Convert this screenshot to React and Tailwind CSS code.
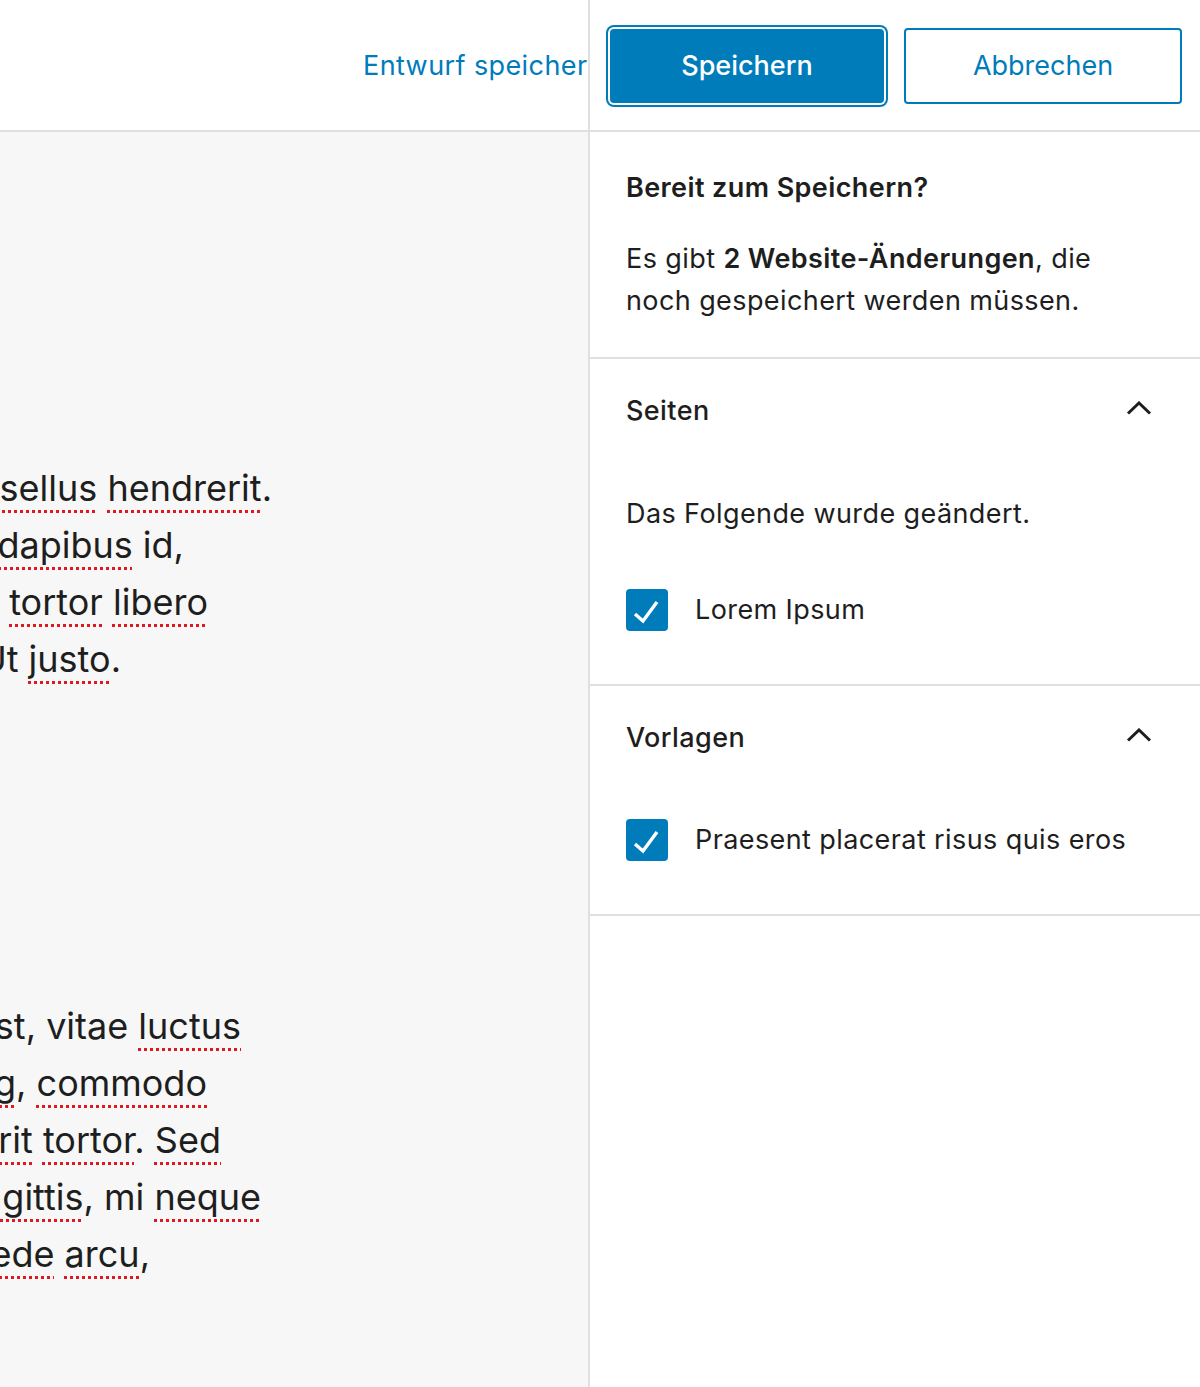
import React from 'react';

const sc = 'underline decoration-dotted decoration-[#e0191f] decoration-[3px] underline-offset-[9px]';

const para1 = [
  { end: 'w-[272px]', words: [['Phasellus', true], ['hendrerit', true, '.']] },
  { end: 'w-[184px]', words: [['aliquet'], ['vel,'], ['dapibus', true], ['id,']] },
  { end: 'w-[208px]', words: [['viverra,'], ['tortor', true], ['libero', true]] },
  { end: 'w-[121px]', words: [['Nullam'], ['mollis.'], ['Ut'], ['justo', true, '.']] },
];

const para2 = [
  { end: 'w-[241px]', words: [['semper'], ['est,'], ['vitae'], ['luctus', true]] },
  { end: 'w-[207px]', words: [['faucibus'], ['adipiscing', true, ','], ['commodo', true]] },
  { end: 'w-[221px]', words: [['elementum'], ['hendrerit', true], ['tortor', true, '.'], ['Sed', true]] },
  { end: 'w-[261px]', words: [['ultrices'], ['sagittis', true, ','], ['mi'], ['neque', true]] },
  { end: 'w-[150px]', words: [['Phasellus'], ['pede', true], ['arcu', true, ',']] },
];

function CanvasLine({ line }) {
  return (
    <div className={`${line.end} flex justify-end`}>
      <span className="shrink-0 whitespace-nowrap">
        {line.words.map(([w, bad, tail], i) => (
          <React.Fragment key={i}>
            {i > 0 && ' '}
            <span className={bad ? sc : ''}>{w}</span>
            {tail}
          </React.Fragment>
        ))}
      </span>
    </div>
  );
}

function Chevron() {
  return (
    <svg width="26" height="14" viewBox="0 0 26 14" fill="none" className="mb-[7px]">
      <path d="M2 12.5 L13 2 L24 12.5" stroke="#1e1e1e" strokeWidth="3" />
    </svg>
  );
}

function Check({ label }) {
  return (
    <div className="flex items-center">
      <div className="w-[42px] h-[42px] rounded-[4px] bg-[#007cba] shrink-0">
        <svg width="42" height="42" viewBox="0 0 42 42" fill="none">
          <path d="M9 25 L17 32 L31 13" stroke="#fff" strokeWidth="3.4" />
        </svg>
      </div>
      <span className="ml-[27px]">{label}</span>
    </div>
  );
}

function Section({ title, children }) {
  return (
    <div className="border-b-2 border-[#e0e0e0] pb-[53px]">
      <div className="h-[104px] flex items-center justify-between pl-[36px] pr-[48px]">
        <span className="font-medium">{title}</span>
        <Chevron />
      </div>
      <div className="pl-[36px]">{children}</div>
    </div>
  );
}

export default function App() {
  return (
    <div
      className="w-[1200px] h-[1387px] flex bg-white text-[#1e1e1e] overflow-hidden"
      style={{ fontFamily: 'Inter, "Noto Sans", sans-serif' }}
    >
      <div className="w-[588px] shrink-0 flex flex-col overflow-hidden">
        <div className="h-[132px] shrink-0 border-b-2 border-[#e0e0e0] bg-white flex items-center pl-[363px] pt-[2px] text-[27px] tracking-[0.015em] text-[#007cba] whitespace-nowrap">
          Entwurf speichern
        </div>
        <div className="flex-1 bg-[#f7f7f7] pt-[328px] text-[36px] leading-[57px]">
          {para1.map((l, i) => <CanvasLine key={i} line={l} />)}
          <div className="h-[310px]" />
          {para2.map((l, i) => <CanvasLine key={i} line={l} />)}
        </div>
      </div>

      <div className="w-[2px] shrink-0 bg-[#e0e0e0]" />

      <div className="flex-1 flex flex-col text-[27px] tracking-[0.015em]">
        <div className="h-[132px] shrink-0 border-b-2 border-[#e0e0e0] flex items-center pl-[20px] gap-[20px] pt-[2px]">
          <button className="w-[274px] h-[74px] rounded-[4px] bg-[#007cba] text-white font-medium text-[27px] tracking-normal shadow-[0_0_0_2px_#fff,0_0_0_4px_#007cba]">
            Speichern
          </button>
          <button className="w-[278px] h-[76px] rounded-[4px] border-2 border-[#007cba] text-[#007cba] text-[27px] tracking-normal">
            Abbrechen
          </button>
        </div>

        <div className="border-b-2 border-[#e0e0e0] pt-[38px] pb-[35px] px-[36px]">
          <div className="font-semibold leading-[36px]">Bereit zum Speichern?</div>
          <p className="mt-[32px] leading-[42px]">
            Es gibt <b className="font-semibold">2 Website-Änderungen</b>, die noch gespeichert werden müssen.
          </p>
        </div>

        <Section title="Seiten">
          <p className="pt-[30px] leading-[42px]">Das Folgende wurde geändert.</p>
          <div className="mt-[54px]">
            <Check label="Lorem Ipsum" />
          </div>
        </Section>

        <Section title="Vorlagen">
          <div className="pt-[29px]">
            <Check label="Praesent placerat risus quis eros" />
          </div>
        </Section>
      </div>
    </div>
  );
}
